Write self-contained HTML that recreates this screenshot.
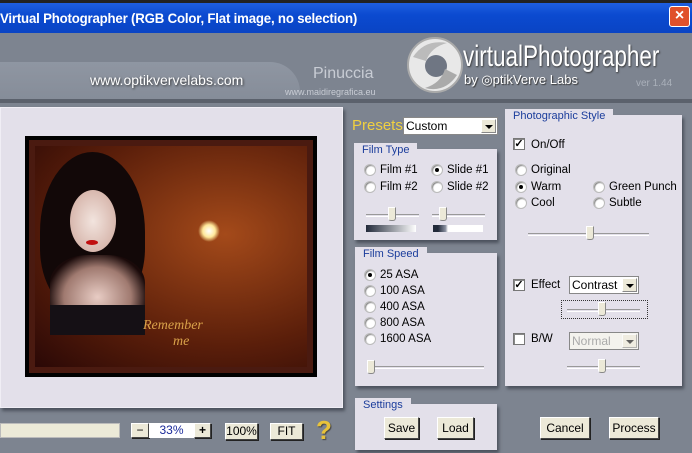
<!DOCTYPE html>
<html><head><meta charset="utf-8"><style>
*{margin:0;padding:0;box-sizing:border-box}
body{width:692px;height:453px;overflow:hidden;background:#7d8490;font-family:"Liberation Sans",sans-serif;font-size:11px;position:relative;color:#000}
.a{position:absolute}
.title{left:0;top:0;width:692px;height:33px;background:linear-gradient(#1f5fe0,#0b4ad0 40%,#0a44c4);border-top:3px solid #222}
.title span{position:absolute;left:0;top:7px;color:#fff;font-weight:bold;font-size:14px;letter-spacing:-0.2px;transform:scaleX(0.945);transform-origin:left;white-space:nowrap}
.close{left:669px;top:6px;width:21px;height:21px;background:#e0502a;border:1px solid #fff;border-radius:3px;color:#fff;font-weight:bold;font-size:16px;text-align:center;line-height:18px}
.panel{background:#e3e0ea;border:1px solid #f0eef5;box-shadow:2px 3px 3px #4c525d}
.grp{background:#e3e0ea;box-shadow:2px 3px 3px #4c525d}
.gt{position:absolute;top:-6px;left:0;background:#e3e0ea;color:#1b3d9c;font-size:11px;padding:0 8px 0 8px;height:16px;line-height:15px}
.r{position:absolute;width:12px;height:12px;border-radius:50%;background:#fff;border:1px solid #bbb;box-shadow:inset 1px 1px 1px #888}
.r.on::after{content:"";position:absolute;left:3px;top:3px;width:4px;height:4px;border-radius:50%;background:#000}
.lb{position:absolute;font-size:11.5px}
.cb{position:absolute;width:12px;height:12px;background:#fff;border:1px solid #777;box-shadow:inset 1px 1px 0 #888;font-size:11px;line-height:10px;text-align:center;font-weight:bold}
.sl{position:absolute;height:3px;border-top:1px solid #999;border-bottom:1px solid #fff}
.th{position:absolute;width:8px;height:14px;background:#ece9d8;border:1px solid #888;border-top-color:#fff;border-left-color:#fff;border-radius:0 0 3px 3px}
.btn{position:absolute;background:#ece9d8;border:1px solid #444;border-top-color:#fff;border-left-color:#fff;box-shadow:1px 1px 0 #222;text-align:center;font-size:12px}
.sel{position:absolute;background:#fff;border:1px solid #888;font-size:12px;padding-left:2px}
.sel b{position:absolute;right:1px;top:1px;bottom:1px;width:15px;background:#ece9d8;border:1px solid #888;border-top-color:#fff;border-left-color:#fff}
.sel b::after{content:"";position:absolute;left:3px;top:5px;border:4px solid transparent;border-top:4px solid #000}
</style></head><body>
<div class="a title"><span>Virtual Photographer (RGB Color, Flat image, no selection)</span></div>
<div class="a close">×</div>
<div class="a" style="left:0;top:62px;width:300px;height:40px;background:linear-gradient(#8f96a2,#858c98);border-radius:0 30px 0 0"></div>
<div class="a" style="left:0;top:99px;width:692px;height:4px;background:#5b616c"></div>
<div class="a" style="left:90px;top:72px;color:#fff;font-size:14px;text-shadow:1px 1px 2px #333">www.optikvervelabs.com</div>
<div class="a" style="left:313px;top:65px;color:#c8ccd4;font-size:16px">Pinuccia</div>
<div class="a" style="left:285px;top:87px;color:#c8ccd4;font-size:9px">www.maidiregrafica.eu</div>
<svg class="a" style="left:405px;top:33px" width="60" height="64"><circle cx="30" cy="32" r="27" fill="#e8e8e8"/><circle cx="30" cy="32" r="27" fill="none" stroke="#aaa" stroke-width="2"/><circle cx="31" cy="33" r="11" fill="#6f7683"/><path d="M8 24 Q20 6 42 10 Q26 14 21 28Z" fill="#bbb"/><path d="M52 42 Q40 60 20 55 Q36 50 40 36Z" fill="#aaa"/></svg>
<div class="a" style="left:463px;top:40px;color:#fff;font-size:30px;white-space:nowrap;transform:scaleX(0.75);transform-origin:left;text-shadow:1px 1px 2px #333">virtualPhotographer</div>
<div class="a" style="left:464px;top:72px;color:#fff;font-size:13px;text-shadow:1px 1px 1px #333">by ◎ptikVerve Labs</div>
<div class="a" style="left:636px;top:78px;color:#aab0ba;font-size:10px">ver 1.44</div>

<div class="a panel" style="left:0;top:107px;width:343px;height:301px"></div>
<div class="a" style="left:25px;top:136px;width:292px;height:241px;background:#000"></div>
<div class="a" style="left:29px;top:140px;width:284px;height:233px;background:radial-gradient(ellipse at 70% 40%,#a44a1a,#5a1e0a 60%,#2a0806);border:6px solid #4a1a10"></div>
<div class="a" style="left:40px;top:152px;width:105px;height:160px;border-radius:50% 50% 40% 40%;background:#120808"></div>
<div class="a" style="left:70px;top:190px;width:46px;height:62px;border-radius:50%;background:radial-gradient(#f2e4de,#d8b8ae 70%,#6a4a44)"></div>
<div class="a" style="left:86px;top:240px;width:12px;height:5px;border-radius:50%;background:#c01010"></div>
<div class="a" style="left:50px;top:255px;width:95px;height:70px;border-radius:40% 40% 10% 10%;background:radial-gradient(ellipse at 50% 60%,#e8ccc4,#a07a70 50%,#1a0a0a 75%)"></div>
<div class="a" style="left:50px;top:305px;width:95px;height:30px;background:#151015"></div>
<div class="a" style="left:198px;top:220px;width:22px;height:22px;border-radius:50%;background:radial-gradient(#fff,#ffe89a 40%,transparent 70%)"></div>
<div class="a" style="left:143px;top:318px;color:#d9a24a;font-family:'Liberation Serif',serif;font-style:italic;font-size:14px">Remember<br><span style="margin-left:30px">me</span></div>

<div class="a" style="left:0;top:423px;width:120px;height:15px;background:#ecead8;border:1px solid #bbb"></div>
<div class="btn" style="left:131px;top:423px;width:18px;height:15px;line-height:12px">−</div>
<div class="a" style="left:149px;top:423px;width:45px;height:15px;background:#fff;color:#1a2a9a;text-align:center;font-size:12px;line-height:14px">33%</div>
<div class="btn" style="left:194px;top:423px;width:17px;height:15px;line-height:12px;font-weight:bold">+</div>
<div class="btn" style="left:225px;top:423px;width:33px;height:17px;line-height:15px">100%</div>
<div class="btn" style="left:270px;top:423px;width:33px;height:17px;line-height:15px">FIT</div>
<div class="a" style="left:316px;top:415px;color:#e8c23a;font-size:26px;font-weight:bold;text-shadow:1px 1px 1px #444">?</div>

<div class="a" style="left:352px;top:117px;color:#f0d040;font-size:15px">Presets</div>
<div class="sel" style="left:403px;top:117px;width:95px;height:18px;line-height:16px">Custom<b></b></div>

<div class="a grp" style="left:354px;top:149px;width:143px;height:91px"><div class="gt">Film Type</div></div>
<div class="r" style="left:364px;top:164px"></div><div class="lb" style="left:380px;top:164px">Film #1</div>
<div class="r on" style="left:431px;top:164px"></div><div class="lb" style="left:447px;top:164px">Slide #1</div>
<div class="r" style="left:364px;top:181px"></div><div class="lb" style="left:380px;top:181px">Film #2</div>
<div class="r" style="left:431px;top:181px"></div><div class="lb" style="left:447px;top:181px">Slide #2</div>
<div class="sl" style="left:366px;top:214px;width:53px"></div><div class="th" style="left:388px;top:207px"></div>
<div class="sl" style="left:432px;top:214px;width:53px"></div><div class="th" style="left:439px;top:207px"></div>
<div class="a" style="left:366px;top:225px;width:50px;height:7px;background:linear-gradient(90deg,#222a3a,#fff)"></div>
<div class="a" style="left:433px;top:225px;width:50px;height:7px;background:linear-gradient(90deg,#222a3a 10%,#8a90a0 25%,#fff 30%)"></div>

<div class="a grp" style="left:355px;top:253px;width:142px;height:133px"><div class="gt">Film Speed</div></div>
<div class="r on" style="left:364px;top:269px"></div><div class="lb" style="left:380px;top:269px">25 ASA</div>
<div class="r" style="left:364px;top:285px"></div><div class="lb" style="left:380px;top:285px">100 ASA</div>
<div class="r" style="left:364px;top:301px"></div><div class="lb" style="left:380px;top:301px">400 ASA</div>
<div class="r" style="left:364px;top:317px"></div><div class="lb" style="left:380px;top:317px">800 ASA</div>
<div class="r" style="left:364px;top:333px"></div><div class="lb" style="left:380px;top:333px">1600 ASA</div>
<div class="sl" style="left:370px;top:366px;width:114px"></div><div class="th" style="left:367px;top:360px"></div>

<div class="a grp" style="left:355px;top:404px;width:142px;height:46px"><div class="gt">Settings</div></div>
<div class="btn" style="left:384px;top:417px;width:35px;height:22px;line-height:20px">Save</div>
<div class="btn" style="left:437px;top:417px;width:37px;height:22px;line-height:20px">Load</div>

<div class="a grp" style="left:505px;top:115px;width:177px;height:271px"><div class="gt" style="left:0;padding-left:8px">Photographic Style</div></div>
<div class="cb" style="left:513px;top:138px">✓</div><div class="lb" style="left:531px;top:139px">On/Off</div>
<div class="r" style="left:515px;top:164px"></div><div class="lb" style="left:531px;top:164px">Original</div>
<div class="r on" style="left:515px;top:181px"></div><div class="lb" style="left:531px;top:181px">Warm</div>
<div class="r" style="left:593px;top:181px"></div><div class="lb" style="left:609px;top:181px">Green Punch</div>
<div class="r" style="left:515px;top:197px"></div><div class="lb" style="left:531px;top:197px">Cool</div>
<div class="r" style="left:593px;top:197px"></div><div class="lb" style="left:609px;top:197px">Subtle</div>
<div class="sl" style="left:528px;top:233px;width:121px"></div><div class="th" style="left:586px;top:226px"></div>
<div class="cb" style="left:513px;top:279px">✓</div><div class="lb" style="left:531px;top:279px">Effect</div>
<div class="sel" style="left:569px;top:276px;width:70px;height:18px;line-height:16px">Contrast<b></b></div>
<div class="a" style="left:561px;top:300px;width:87px;height:19px;border:1px dotted #333"></div>
<div class="sl" style="left:567px;top:309px;width:73px"></div><div class="th" style="left:598px;top:302px"></div>
<div class="cb" style="left:513px;top:333px"></div><div class="lb" style="left:531px;top:333px">B/W</div>
<div class="sel" style="left:569px;top:332px;width:70px;height:18px;line-height:16px;color:#aaa;background:#f4f3ee">Normal<b style="opacity:.6"></b></div>
<div class="sl" style="left:567px;top:366px;width:73px"></div><div class="th" style="left:598px;top:359px"></div>

<div class="btn" style="left:540px;top:417px;width:50px;height:22px;line-height:20px">Cancel</div>
<div class="btn" style="left:609px;top:417px;width:50px;height:22px;line-height:20px">Process</div>
</body></html>
